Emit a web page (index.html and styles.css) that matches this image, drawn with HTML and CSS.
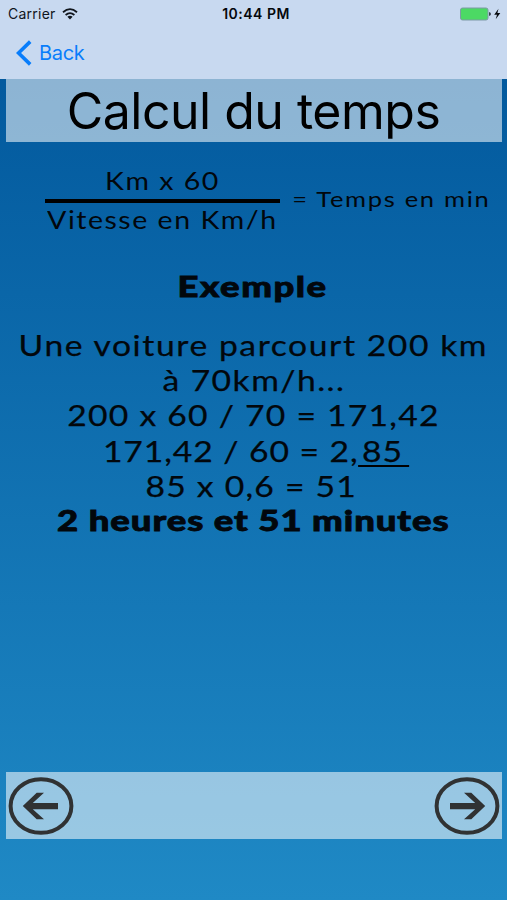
FILE: index.html
```html
<!DOCTYPE html>
<html lang="fr">
<head>
<meta charset="utf-8">
<title>Calcul du temps</title>
<link rel="stylesheet" href="styles.css">
</head>
<body>
<header class="top">
  <div class="status">
    <div class="carrier"><span>Carrier</span>
      <svg class="wifi" viewBox="0 0 16 12" width="16" height="12"><g fill="none" stroke="#10151c" stroke-width="1.8"><path d="M1 4.2Q8-1.9 15 4.2"/><path d="M3.6 7Q8 3.2 12.4 7"/></g><path d="M5.4 8.8Q8 6.9 10.6 8.8L8 11.5Z" fill="#10151c"/></svg>
    </div>
    <div class="clock">10:44 PM</div>
    <div class="power">
      <svg viewBox="0 0 43 14" width="43" height="14"><rect x="1.5" y="1" width="27.5" height="12" rx="2" fill="#4cd964" stroke="#7d9aa5"/><path d="M30 5Q32 5.3 32 7T30 9Z" fill="#39424e"/><path d="M39.5 1.8L35.2 7.8H38L36.7 12.2L41.3 6.1H38.4Z" fill="#080b10"/></svg>
    </div>
  </div>
  <nav class="nav">
    <svg viewBox="0 0 16 26" width="16" height="26"><path d="M14.2 1.6L2.5 13L14.2 24.4" fill="none" stroke="#087dfb" stroke-width="3.6"/></svg>
    <span class="back">Back</span>
  </nav>
</header>
<main class="page">
  <h1 class="title"><span>Calcul du temps</span></h1>
  <section class="formula">
    <div class="fraction">
      <div class="num"><span>Km x 60</span></div>
      <div class="den"><span>Vitesse en Km/h</span></div>
    </div>
    <div class="result"><span>= Temps en min</span></div>
  </section>
  <h2 class="heading"><span>Exemple</span></h2>
  <section class="example">
    <p class="first"><span>Une voiture parcourt 200 km</span></p>
    <p class="speed"><span>à 70km/h...</span></p>
    <p class="calc"><span>200 x 60 / 70 = 171,42</span></p>
    <p class="calc decimal"><span>171,42 / 60 = 2,<u>85</u></span></p>
    <p class="calc last"><span>85 x 0,6 = 51</span></p>
    <p class="answer"><span>2 heures et 51 minutes</span></p>
  </section>
  <footer class="pager">
    <svg viewBox="0 0 66 58" width="66" height="58"><ellipse cx="33" cy="29" rx="30.4" ry="26.8" fill="none" stroke="#303233" stroke-width="4"/><path d="M14.8 29L28.7 15.8H36L24.8 26H50V32.2H24.8L36 42.2H28.7Z" fill="#303233"/></svg>
    <svg viewBox="0 0 66 58" width="66" height="58"><g transform="translate(66) scale(-1 1)"><ellipse cx="33" cy="29" rx="30.4" ry="26.8" fill="none" stroke="#303233" stroke-width="4"/><path d="M14.8 29L28.7 15.8H36L24.8 26H50V32.2H24.8L36 42.2H28.7Z" fill="#303233"/></g></svg>
  </footer>
</main>
</body>
</html>
```
FILE: styles.css
```css
* { box-sizing: border-box; }
body {
  margin: 0;
  height: 900px;
  display: flex;
  flex-direction: column;
  overflow: hidden;
  background: linear-gradient(#00559a, #1f89c5);
  color: #02070c;
  font-family: Lato, sans-serif;
}
h1, h2, p { margin: 0; font-weight: 400; }
svg { display: block; flex: none; }
.top { height: 79px; background: #c8d9f0; font-family: Inter, sans-serif; }
.status {
  height: 27px;
  padding: 0 5px 0 8px;
  display: grid;
  grid-template-columns: 1fr auto 1fr;
  align-items: center;
  font-size: 14px;
  color: #10151c;
}
.carrier { display: flex; align-items: center; gap: 6px; letter-spacing: .25px; }
.clock { font-weight: 600; letter-spacing: .5px; padding-left: 2px; color: #05080c; }
.power { display: flex; justify-content: flex-end; }
.nav { height: 52px; display: flex; align-items: center; gap: 7px; padding-left: 16px; }
.back { font-size: 20px; color: #087dfb; letter-spacing: -.3px; }
.page { flex: 1; display: flex; flex-direction: column; }
.page span { display: inline-block; white-space: nowrap; }
.title {
  height: 63px;
  margin: 0 5px 0 6px;
  padding-right: 1px;
  background: rgba(255, 255, 255, .55);
  text-align: center;
  font: 50px/65px Inter, sans-serif;
  letter-spacing: -.5px;
  color: #000;
}
.formula { display: flex; margin-top: 24px; padding-left: 45px; }
.fraction {
  width: 235px;
  font-size: 24.6px;
  letter-spacing: 1.3px;
  text-align: center;
}
.num { height: 37px; line-height: 30px; border-bottom: 4px solid #000; }
.den { height: 36px; line-height: 33px; display: flex; justify-content: center; }
.result {
  width: 222px;
  padding-top: 18px;
  display: flex;
  justify-content: center;
  font-size: 22px;
  line-height: 30px;
  letter-spacing: 1.45px;
}
.num span, .den span, .result span, .example span { transform: scaleX(1.16); }
.heading {
  margin-top: 19px;
  line-height: 56px;
  text-align: center;
  font-size: 28.5px;
  font-weight: 900;
  letter-spacing: 1.17px;
  height: 62px;
  padding-right: 2px;
}
.example { padding-top: 7px; font-size: 29px; text-align: center; -webkit-text-stroke: .25px; }
.example p { height: 35.2px; line-height: 35.2px; display: flex; justify-content: center; }
.first { letter-spacing: 1.36px; }
.speed { letter-spacing: 1.26px; }
.calc { letter-spacing: 1.08px; }
.calc u {
  padding: 0 5px 0 3px;
  text-decoration: none;
  background: linear-gradient(#000, #000) 0 calc(100% - 1px) / 100% 2px no-repeat;
}
.example .decimal { padding-left: 4px; letter-spacing: .82px; }
.example .last { padding-right: 5px; }
.answer { font-size: 28.5px; font-weight: 900; letter-spacing: .72px; }
.heading span, .example .answer span { transform: scaleX(1.28); -webkit-text-stroke: .8px; }
.pager {
  height: 67px;
  margin: auto 5px 61px 6px;
  padding: 0 2px;
  display: flex;
  justify-content: space-between;
  align-items: center;
  background: rgba(255, 255, 255, .55);
}
```
